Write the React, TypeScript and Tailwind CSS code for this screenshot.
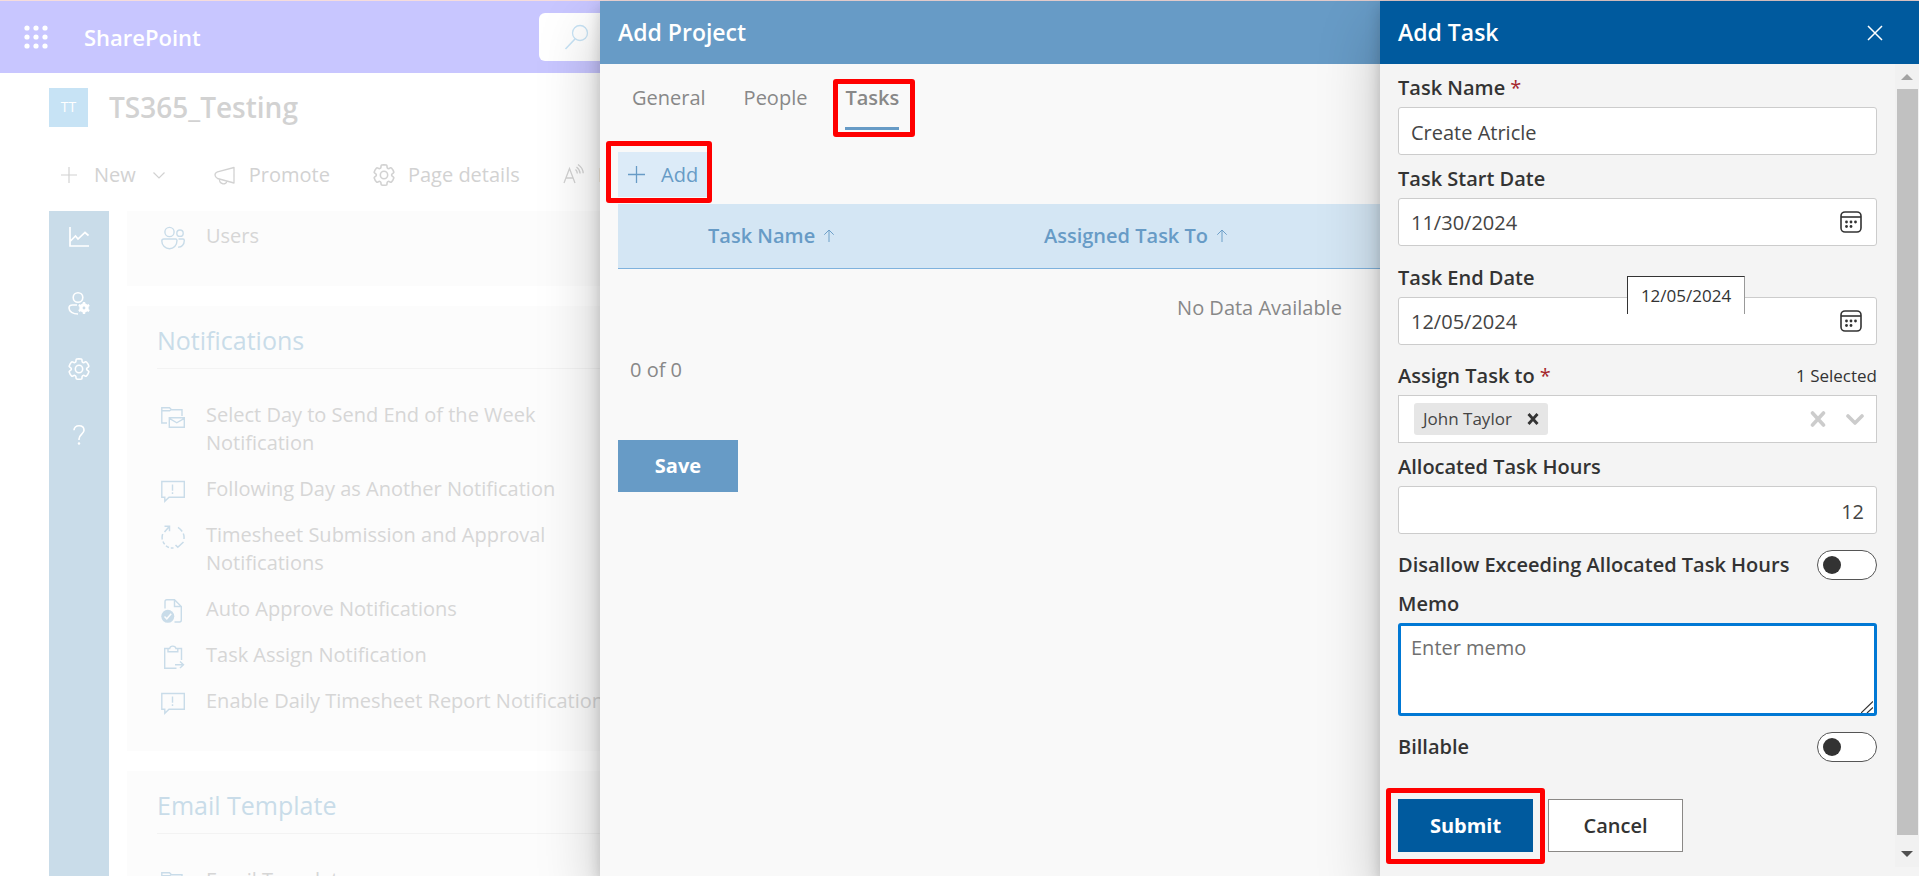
import React from "react";

type IconProps = { className?: string };

function Svg({
  className = "size-6",
  box = 24,
  stroke = 1.3,
  children,
}: {
  className?: string;
  box?: number;
  stroke?: number;
  children: React.ReactNode;
}) {
  return (
    <svg
      viewBox={`0 0 ${box} ${box}`}
      className={`shrink-0 ${className}`}
      fill="none"
      stroke="currentColor"
      strokeWidth={stroke}
      aria-hidden="true"
    >
      {children}
    </svg>
  );
}

const gearPath =
  "M12.01 2.25c.74.01 1.470.09 2.180.25.31.07.55.33.59.65l.17 1.530c.08.7.67 1.230 1.370 1.230.19 0 .38-.04.55-.12l1.400-.61c.29-.13.63-.06.85.17 1.010 1.080 1.770 2.380 2.210 3.790.09.31-.02.64-.27.83l-1.240.92c-.36.26-.57.67-.57 1.110s.21.85.57 1.110l1.240.92c.26.19.37.52.27.83-.44 1.410-1.190 2.710-2.200 3.790-.22.23-.56.3-.85.17l-1.410-.61c-.4-.18-.86-.15-1.240.07s-.63.61-.68 1.040l-.17 1.530c-.03.31-.26.57-.57.65-1.450.34-2.960.34-4.410 0-.31-.07-.54-.33-.57-.65l-.17-1.520c-.05-.44-.3-.82-.68-1.040s-.84-.25-1.240-.07l-1.410.62c-.29.13-.63.06-.85-.17-1.010-1.080-1.770-2.380-2.200-3.800-.09-.3.01-.64.27-.83l1.240-.91c.35-.26.56-.67.56-1.110s-.21-.85-.56-1.110l-1.240-.92c-.26-.19-.37-.52-.27-.83.44-1.410 1.190-2.710 2.200-3.790.22-.23.56-.3.85-.17l1.400.61c.4.18.87.15 1.250-.07s.63-.61.68-1.050l.17-1.520c.04-.32.27-.58.58-.65.72-.16 1.450-.24 2.200-.25z";

const Waffle = () => (
  <svg viewBox="0 0 24 24" className="size-6" fill="currentColor" aria-hidden="true">
    {[3, 12, 21].map((y) =>
      [3, 12, 21].map((x) => <circle key={`${x}-${y}`} cx={x} cy={y} r="2.6" />),
    )}
  </svg>
);
const SearchIcon = () => (
  <Svg className="size-7" box={28}>
    <circle cx="17" cy="10" r="7.5" />
    <path d="M12 16 2.5 26" strokeWidth="1.6" />
  </Svg>
);
const PlusIcon = ({ className = "size-4" }: IconProps) => (
  <Svg className={className} box={16} stroke={1.2}>
    <path d="M8 0v16M0 8h16" />
  </Svg>
);
const ChevronIcon = () => (
  <Svg className="size-3" box={12} stroke={1.2}>
    <path d="m.5 3.5 5.500 5.500L11.500 3.500" />
  </Svg>
);
const Megaphone = () => (
  <Svg>
    <path
      d="M21 4.500v15.500L4.500 15.500C3 14.500 2 13.200 2 12s.8-2.600 2.500-3.200z"
      strokeLinejoin="round"
    />
    <path d="M6.500 16.300c-.3 5.500 6.800 5.700 7.300 2" />
  </Svg>
);
const Gear = ({ className = "size-6" }: IconProps) => (
  <Svg className={className} stroke={1.5}>
    <g transform="translate(-.6 -.6) scale(1.050)">
      <path d={gearPath} strokeLinejoin="round" />
      <circle cx="12" cy="12" r="3.500" />
    </g>
  </Svg>
);
const ReaderIcon = () => (
  <Svg className="size-6">
    <path d="m2 20 5.500-14.500L13 20M4 15h7.200" />
    <path d="M13.500 6.500c1.200 1 1.800 2.300 1.800 4M14.500 4c2 1.500 3.500 3.700 3.600 6.500M16 1.500c3 2 5 5 5.200 8.800" />
  </Svg>
);
const ChartIcon = () => (
  <Svg className="size-5" box={20} stroke={1.700}>
    <path d="M1 0v19h19M1.500 14l5-5 2.500 3L16 5.500l3.500 3" />
  </Svg>
);
const UserGear = () => (
  <Svg className="size-6" stroke={1.600}>
    <circle cx="11" cy="6.500" r="4.800" />
    <path d="M10 14H5.500C3 14 2 15.500 2 17c0 3.500 4 6 9 6" />
    <circle cx="17" cy="17" r="3.200" strokeWidth="3" />
    <path d="M17 11v12M11.800 14l10.400 6M22.200 14l-10.400 6" strokeWidth="2.400" />
    <circle cx="17" cy="17" r="1.400" fill="#c9dce9" stroke="none" />
  </Svg>
);
const HelpIcon = () => (
  <Svg className="size-5" box={20} stroke={1.600}>
    <path d="M5 5.200C5 2.500 7 .8 10 .8s5 1.800 5 4.400c0 3.800-5 4-5 8.800v1" />
    <circle cx="10" cy="18.500" r="1.200" fill="currentColor" stroke="none" />
  </Svg>
);
const UsersIcon = () => (
  <Svg stroke={1.400}>
    <circle cx="8.500" cy="6" r="4.600" />
    <circle cx="19" cy="7.200" r="3.200" />
    <path d="M3 13h11.500c1 0 1.500.5 1.500 1.500 0 5-3.500 8.300-7.500 8.300S.8 19.500.8 15c0-1.300.8-2 2.200-2zM17.500 13H22c.9 0 1.300.6 1.300 1.500 0 4-2.800 7-6.300 6.600" />
  </Svg>
);
const FolderMail = () => (
  <Svg stroke={1.400}>
    <path d="M6 18H.8V2.700h7.700l2 2H21V11M.8 5.800h7.700l2-1.300" />
    <path d="M8.300 12.800h15v9.500h-15zM8.300 13.300l7.500 4.500 7.500-4.500" />
  </Svg>
);
const CommentAlert = () => (
  <Svg stroke={1.400}>
    <path d="M.8 2.500h22.500v15.800H8L3.800 22.300v-4H.8z" />
    <path d="M11.500 5.500v6.300M11.500 13.300v1.700" />
  </Svg>
);
const SyncCheck = () => (
  <Svg stroke={1.500}>
    <path d="M3.500 1.200h5v5M8.500 1.200 3.500 7M1.700 9C1 11 1 13 1.300 14.500" />
    <path d="M2 16.500c.5 1.200 1 2 1.700 2.800M5 20.700c1 .9 2 1.500 3 1.800M9.800 23h2.700M17 2.300c1.600.9 3 2.200 4.200 4.200M22.300 8.500c.7 1.500.9 3.500.7 5.500M14.500 20l2.300 2.300L22.500 17" />
  </Svg>
);
const DocCheck = () => (
  <Svg stroke={1.400}>
    <path d="M4 9.500V2.800c0-1.300.7-2 1.700-2h7.800l6.800 6.700V21c0 1.300-.7 2-1.800 2h-5M13.500.8v6.700h6.800" />
    <circle cx="6.800" cy="17.300" r="6.500" fill="currentColor" stroke="none" />
    <path d="m3.500 17.500 2.300 2.300 4.400-5" stroke="#fcfcfc" strokeWidth="1.500" />
  </Svg>
);
const ClipboardArrow = () => (
  <Svg stroke={1.400}>
    <path d="M15.500 23.200H3.700V3.500h5c.3-3.200 5.800-3.200 6.200 0h5.600V15M7 3.500v3.200h9.800V3.500M14 19.800h8.500M19 16.500l3.500 3.300-3.500 3.300" />
  </Svg>
);
const ArrowUp = () => (
  <Svg className="h-4 w-3" box={14} stroke={1.100}>
    <path d="M7 0v14M1.500 5.500 7 0l5.500 5.500" />
  </Svg>
);
const CalendarIcon = () => (
  <Svg className="size-[22px]" box={22} stroke={1.600}>
    <rect x="1" y="1" width="20" height="20" rx="4" />
    <path d="M1 6h20" />
    <g fill="currentColor" stroke="none">
      <circle cx="6.500" cy="11" r="1.400" />
      <circle cx="11" cy="11" r="1.400" />
      <circle cx="15.500" cy="11" r="1.400" />
      <circle cx="6.500" cy="15.500" r="1.400" />
      <circle cx="11" cy="15.500" r="1.400" />
    </g>
  </Svg>
);

/* Red marker that surrounds a highlighted control. */
const Marker = ({ className }: { className: string }) => (
  <span
    aria-hidden="true"
    className={`pointer-events-none absolute rounded-[3px] border-5 border-[#ff0000] ${className}`}
  />
);

const panelShadow = "shadow-[0_26px_58px_rgba(0,0,0,0.22),0_5px_14px_rgba(0,0,0,0.18)]";

const notifications = [
  { icon: <FolderMail />, text: "Select Day to Send End of the Week Notification" },
  { icon: <CommentAlert />, text: "Following Day as Another Notification" },
  { icon: <SyncCheck />, text: "Timesheet Submission and Approval Notifications" },
  { icon: <DocCheck />, text: "Auto Approve Notifications" },
  { icon: <ClipboardArrow />, text: "Task Assign Notification" },
  { icon: <CommentAlert />, text: "Enable Daily Timesheet Report Notification" },
];

function LinkItem({ icon, text }: { icon: React.ReactNode; text: string }) {
  return (
    <li>
      <a href="#" className="flex gap-[21px]">
        <span className="pt-1 text-[#c9dce9]">{icon}</span>
        <span className="w-[412px] leading-7 text-[#d6d6d6]">{text}</span>
      </a>
    </li>
  );
}

function Card({ title, children }: { title: string; children: React.ReactNode }) {
  return (
    <section className="bg-[#fcfcfc] pt-4 pr-8 pb-9 pl-[30px]">
      <h2 className="border-b border-[#f3f3f3] pb-2.5 text-[25px] leading-9 text-[#c9dce9]">
        {title}
      </h2>
      <ul className="mt-8 flex flex-col gap-[18px] pl-1">{children}</ul>
    </section>
  );
}

function SitePage() {
  return (
    <div className="flex h-full flex-col bg-white text-[#d2d2d2]">
      <header className="flex h-[73px] shrink-0 items-center border-t border-[#f5dcdc] bg-[#c8c6ff] pl-6 text-white">
        <button aria-label="App launcher">
          <Waffle />
        </button>
        <a href="#" className="ml-9 w-[455px] text-[22px] font-semibold">
          SharePoint
        </a>
        <div className="flex h-12 w-[560px] items-center rounded-md bg-white pl-6 text-[#c7e3f5]">
          <SearchIcon />
          <input aria-label="Search" className="h-full flex-1" />
        </div>
      </header>
      <div className="flex items-center gap-[21px] pt-3.5 pl-[49px]">
        <span className="flex size-[39px] items-center justify-center bg-[#c7e3f5] text-sm text-white">
          TT
        </span>
        <h1 className="text-[28px] leading-10 font-semibold">TS365_Testing</h1>
      </div>
      <div className="flex h-[84px] shrink-0 items-center pt-3 pl-[61px] whitespace-nowrap">
        <button className="flex items-center gap-[17px]">
          <PlusIcon />
          <span>New</span>
          <ChevronIcon />
        </button>
        <button className="ml-12 flex items-center gap-3">
          <Megaphone />
          <span>Promote</span>
        </button>
        <button className="ml-[42px] flex items-center gap-3">
          <Gear />
          <span>Page details</span>
        </button>
        <button className="ml-[42px] flex items-center gap-3">
          <ReaderIcon />
          <span>Immersive Reader</span>
        </button>
      </div>
      <div className="flex min-h-0 flex-1 gap-[18px] overflow-hidden pl-[49px]">
        <nav className="flex w-[60px] flex-col items-center gap-[42px] bg-[#c9dce9] pt-[14px] text-white">
          {[
            { label: "Dashboard", icon: <ChartIcon /> },
            { label: "User settings", icon: <UserGear /> },
            { label: "Settings", icon: <Gear /> },
            { label: "Help", icon: <HelpIcon /> },
          ].map((item) => (
            <button
              key={item.label}
              aria-label={item.label}
              className="flex size-6 items-center justify-center"
            >
              {item.icon}
            </button>
          ))}
        </nav>
        <main className="flex flex-1 flex-col gap-5">
          <section className="bg-[#fcfcfc] pt-[11px] pb-9 pl-[34px]">
            <ul>
              <LinkItem icon={<UsersIcon />} text="Users" />
            </ul>
          </section>
          <Card title="Notifications">
            {notifications.map((n) => (
              <LinkItem key={n.text} icon={n.icon} text={n.text} />
            ))}
          </Card>
          <Card title="Email Template">
            <LinkItem icon={<FolderMail />} text="Email Template" />
          </Card>
        </main>
      </div>
    </div>
  );
}

function ProjectPanel() {
  return (
    <section
      aria-label="Add Project"
      className={`absolute inset-y-0 right-0 mt-px w-[1319px] max-w-full bg-[#f9f9f9] text-[#888] ${panelShadow}`}
    >
      <header className="flex h-[63px] items-center bg-[#679bc6] pl-[18px] text-[23px] font-semibold text-white">
        <h2>Add Project</h2>
      </header>
      <div className="px-[18px]">
        <div role="tablist" className="flex gap-[38px] pt-4 pl-3.5 leading-9">
          <button role="tab" aria-selected="false" className="h-[50px] border-b-3 border-transparent">
            <span className="block h-[47px]">General</span>
          </button>
          <button role="tab" aria-selected="false" className="h-[50px] border-b-3 border-transparent">
            <span className="block h-[47px]">People</span>
          </button>
          <button
            role="tab"
            aria-selected="true"
            className="relative h-[50px] border-b-3 border-[#679bc6] font-semibold"
          >
            <span className="block h-[47px]">Tasks</span>
            <Marker className="-top-px -right-4 -bottom-2.5 -left-3" />
          </button>
        </div>
        <div className="mt-[22px] flex">
          <button className="relative flex h-[45px] items-center gap-4 bg-[#dcebf8] px-2.5 text-[#679bc6]">
            <PlusIcon className="size-[17px]" />
            <span>Add</span>
            <Marker className="-top-[11px] -right-1 -bottom-1.5 -left-3" />
          </button>
        </div>
        <table className="mt-[7px] w-full table-fixed text-left">
          <thead>
            <tr className="h-16 border-b border-[#7fb2dd] bg-[#d4e6f4] text-[#679bc6]">
              <th className="w-[90px]" aria-label="Select" />
              <th className="w-[336px] font-semibold">
                <span className="flex items-center gap-2">
                  Task Name <ArrowUp />
                </span>
              </th>
              <th className="font-semibold">
                <span className="flex items-center gap-2">
                  Assigned Task To <ArrowUp />
                </span>
              </th>
            </tr>
          </thead>
          <tbody>
            <tr className="h-20">
              <td colSpan={3} className="text-center">
                No Data Available
              </td>
            </tr>
          </tbody>
        </table>
        <p className="mt-2 pl-3 leading-7">0 of 0</p>
        <button className="mt-14 h-[52px] w-[120px] bg-[#679bc6] font-bold text-white">
          Save
        </button>
      </div>
    </section>
  );
}

const labelClass = "block font-semibold leading-7";
const inputClass =
  "block h-12 w-full rounded-[3px] border border-[#ccc] bg-white px-3 pt-0.5 text-[#444] outline-none";

function DateField({ id, label, value }: { id: string; label: string; value: string }) {
  return (
    <div>
      <label htmlFor={id} className={labelClass}>
        {label}
      </label>
      <div className="mt-[5px] flex h-12 items-center rounded-[3px] border border-[#ccc] bg-white pr-3.5">
        <input
          id={id}
          defaultValue={value}
          className="h-full min-w-0 flex-1 px-3 text-[#444] outline-none"
        />
        <button type="button" aria-label={`Open calendar for ${label}`}>
          <CalendarIcon />
        </button>
      </div>
    </div>
  );
}

function Toggle({ id, label }: { id: string; label: string }) {
  return (
    <div className="flex items-center justify-between">
      <label htmlFor={id} className={labelClass}>
        {label}
      </label>
      <span className="relative flex h-[30px] w-[60px]">
        <input
          id={id}
          type="checkbox"
          role="switch"
          className="peer h-full w-full appearance-none rounded-full border border-[#555] bg-white"
        />
        <span
          aria-hidden="true"
          className="pointer-events-none absolute top-1.5 left-1.5 size-[18px] rounded-full bg-[#333] peer-checked:left-9"
        />
      </span>
    </div>
  );
}

const Required = () => <span className="font-normal text-[#a4262c]">*</span>;

function TaskPanel() {
  return (
    <section
      aria-label="Add Task"
      className={`absolute inset-y-0 right-0 mt-px flex w-[539px] max-w-full flex-col bg-[#f4f4f4] text-[#333] ${panelShadow}`}
    >
      <header className="flex h-[63px] shrink-0 items-center justify-between bg-[#005a9e] pr-9 pl-[18px] text-white">
        <h2 className="text-[23px] font-semibold">Add Task</h2>
        <button aria-label="Close">
          <Svg className="size-4" box={16} stroke={1.500}>
            <path d="m1 1 14 14M15 1 1 15" />
          </Svg>
        </button>
      </header>
      <div className="flex min-h-0 flex-1">
        <form className="flex-1 px-[18px] pt-2.5" onSubmit={(e) => e.preventDefault()}>
          <label htmlFor="task-name" className={labelClass}>
            Task Name <Required />
          </label>
          <input id="task-name" defaultValue="Create Atricle" className={`mt-[5px] ${inputClass}`} />
          <div className="mt-2.5">
            <DateField id="start-date" label="Task Start Date" value="11/30/2024" />
          </div>
          <div className="relative mt-[18px]">
            <DateField id="end-date" label="Task End Date" value="12/05/2024" />
            <div
              role="tooltip"
              className="absolute top-3 left-[229px] flex h-[38px] w-[118px] items-center justify-center border-t border-r border-l border-[#333] border-r-[#999] bg-white text-[17px]"
            >
              12/05/2024
            </div>
          </div>
          <div className="mt-[17px] flex items-center justify-between">
            <label htmlFor="assignee" className={labelClass}>
              Assign Task to <Required />
            </label>
            <span className="text-[17px]">1 Selected</span>
          </div>
          <div className="mt-[5px] flex h-12 items-center border border-[#ccc] bg-white pr-3 pl-[15px]">
            <span className="flex h-8 items-center gap-[15px] rounded-[3px] bg-[#e6e6e6] px-[9px] text-[17px] text-[#444]">
              John Taylor
              <button type="button" aria-label="Remove John Taylor" className="text-[#333]">
                <Svg className="size-3" box={12} stroke={2.800}>
                  <path d="m1.500 1 9 10M10.500 1l-9 10" />
                </Svg>
              </button>
            </span>
            <input
              id="assignee"
              role="combobox"
              aria-expanded="false"
              className="h-full min-w-0 flex-1 outline-none"
            />
            <button type="button" aria-label="Clear selection" className="text-[#ccc]">
              <Svg className="size-4" box={16} stroke={3.600}>
                <path d="m2.500 2 11 12M13.500 2l-11 12" strokeLinecap="round" />
              </Svg>
            </button>
            <button type="button" aria-label="Open list" className="ml-5 text-[#ccc]">
              <Svg className="size-[18px]" box={18} stroke={3.600}>
                <path d="m2 6 7 7 7-7" strokeLinecap="round" strokeLinejoin="round" />
              </Svg>
            </button>
          </div>
          <label htmlFor="hours" className={`mt-2.5 ${labelClass}`}>
            Allocated Task Hours
          </label>
          <input id="hours" defaultValue="12" className={`mt-[5px] text-right ${inputClass}`} />
          <div className="mt-4">
            <Toggle id="disallow" label="Disallow Exceeding Allocated Task Hours" />
          </div>
          <label htmlFor="memo" className={`mt-2.5 ${labelClass}`}>
            Memo
          </label>
          <div className="relative mt-[5px]">
            <textarea
              id="memo"
              placeholder="Enter memo"
              className="block h-[93px] w-full resize-none rounded-[3px] border-3 border-[#0078d4] bg-white px-2.5 py-2 leading-7 outline-none placeholder:text-[#707070]"
            />
            <Svg className="pointer-events-none absolute right-1 bottom-[3px] size-3" box={12} stroke={1.200}>
              <path d="M0 12 12 .5M6 12l6-5.500" />
            </Svg>
          </div>
          <div className="mt-4">
            <Toggle id="billable" label="Billable" />
          </div>
          <div className="mt-[37px] flex gap-[15px]">
            <button className="relative h-[53px] w-[135px] bg-[#005a9e] font-bold text-white">
              Submit
              <Marker className="-inset-x-3 -top-[11px] -bottom-3" />
            </button>
            <button
              type="button"
              className="h-[53px] w-[135px] border border-[#8a8886] bg-white font-semibold"
            >
              Cancel
            </button>
          </div>
        </form>
        <div
          aria-hidden="true"
          className="mb-[9px] flex w-6 flex-col items-center bg-[#f1f1f1] pt-2.5 pb-2.5"
        >
          <svg viewBox="0 0 12 6" className="h-1.5 w-3 fill-[#a3a3a3]">
            <path d="M0 6 6 0l6 6z" />
          </svg>
          <div className="my-[9px] mb-4 w-[21px] flex-1 bg-[#c1c1c1]" />
          <svg viewBox="0 0 12 6" className="h-1.5 w-3 fill-[#505050]">
            <path d="m0 0 6 6 6-6z" />
          </svg>
        </div>
      </div>
    </section>
  );
}

export default function App() {
  return (
    <div className="relative h-screen overflow-hidden bg-[#f5dcd6] font-['Open_Sans','Noto_Sans',sans-serif] text-[20px]">
      <SitePage />
      <ProjectPanel />
      <TaskPanel />
    </div>
  );
}
